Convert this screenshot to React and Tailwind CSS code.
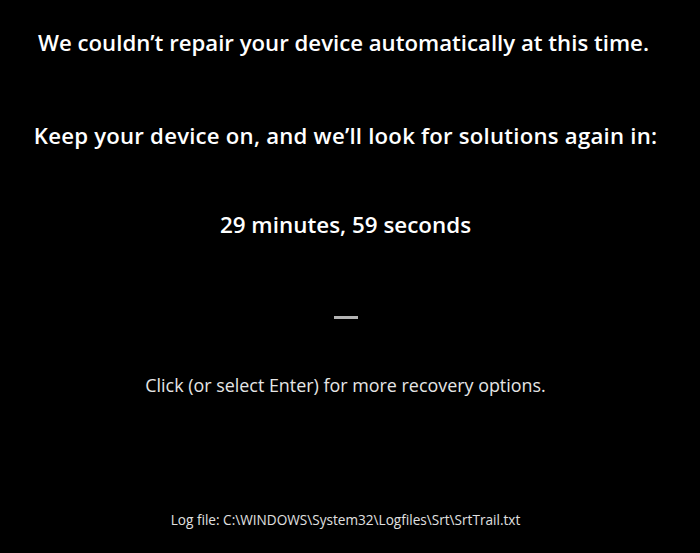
export default function App() {
  const font = { fontFamily: '"Open Sans", "Noto Sans", sans-serif' };
  return (
    <div className="w-[700px] h-[553px] bg-black text-white flex flex-col items-center overflow-hidden pr-[9px]" style={font}>
      <div className="mt-[29px] h-[28px] leading-[28px] text-[22.2px] font-semibold whitespace-nowrap pr-[4px]">
        We couldn’t repair your device automatically at this time.
      </div>
      <div className="mt-[65px] h-[28px] leading-[28px] text-[22.2px] font-semibold tracking-[0.22px] whitespace-nowrap">
        Keep your device on, and we’ll look for solutions again in:
      </div>
      <div className="mt-[61px] h-[28px] leading-[28px] text-[22.4px] font-semibold whitespace-nowrap">
        29 minutes, 59 seconds
      </div>
      <div className="mt-[77px] w-[24px] h-[3px] bg-[#b4b4b4]" />
      <div className="mt-[54px] h-[24px] leading-[24px] text-[17.9px] text-[#e6e6e6] whitespace-nowrap">
        Click (or select Enter) for more recovery options.
      </div>
      <div className="mt-[113px] h-[20px] leading-[20px] text-[13.6px] text-[#e0e0e0] whitespace-nowrap">
        Log file: C:\WINDOWS\System32\Logfiles\Srt\SrtTrail.txt
      </div>
    </div>
  );
}
